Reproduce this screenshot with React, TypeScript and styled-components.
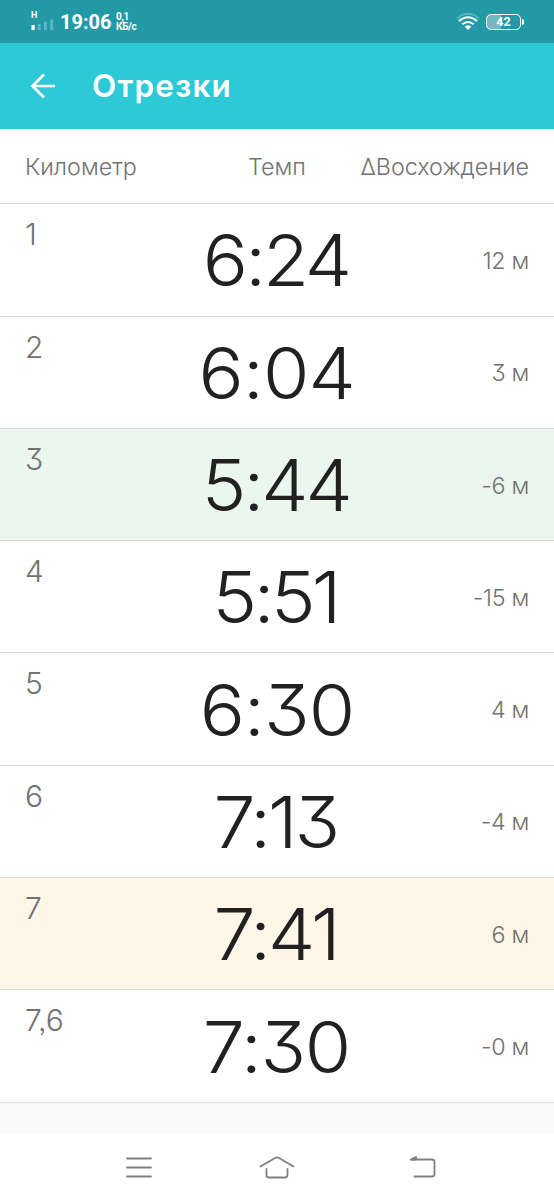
import React from "react";
import styled, { createGlobalStyle } from "styled-components";

const Global = createGlobalStyle`
  * { box-sizing: border-box; }
  body { margin: 0; background: #fff; }
`;

const Screen = styled.div`
  width: 554px;
  height: 1200px;
  display: flex;
  flex-direction: column;
  overflow: hidden;
  background: #fafafa;
  font-family: Inter, "Open Sans", sans-serif;
  font-feature-settings: "cv09" 1, "ss03" 1, "calt" 0;
  color: #727272;
`;

const StatusBar = styled.div`
  height: 43px;
  flex: none;
  display: flex;
  align-items: center;
  padding: 0 30px;
  background: #2499a6;
  color: #fff;
  font-family: Roboto, sans-serif;
`;

const Network = styled.div`
  display: flex;
  flex-direction: column;
  width: 30px;
  padding-left: 1px;
  margin-top: -2px;
  font-size: 9px;
  line-height: 8px;
  font-weight: 700;
`;

const Signal = styled.svg`
  width: 23px;
  height: 11px;
`;

const Clock = styled.div`
  width: 56px;
  font-size: 20px;
  font-weight: 700;
  line-height: 24px;
  padding-top: 1px;
  white-space: nowrap;
`;

const Speed = styled.div`
  flex: 1;
  font-size: 10px;
  font-weight: 700;
  line-height: 10px;
  letter-spacing: -0.3px;
  white-space: pre-line;
`;

const Wifi = styled.svg`
  width: 24px;
  height: 18px;
  margin-right: 6px;
`;

const Battery = styled.div`
  position: relative;
  width: 35px;
  height: 16px;
  border: 1.5px solid #fff;
  border-radius: 5px;
  background: linear-gradient(90deg, #71b9c1 42%, transparent 42%);
  font-size: 12.5px;
  font-weight: 700;
  line-height: 14px;
  text-align: center;
  margin-right: 3px;

  &::after {
    content: "";
    position: absolute;
    right: -4px;
    top: 4px;
    width: 2px;
    height: 6px;
    border-radius: 0 2px 2px 0;
    background: #fff;
  }
`;

const AppBar = styled.header`
  height: 86px;
  flex: none;
  display: flex;
  align-items: center;
  padding-left: 30px;
  background: #2ec9d7;
`;

const BackArrow = styled.svg`
  width: 26px;
  height: 26px;
  margin-right: 36px;
`;

const Title = styled.h1`
  margin: 0;
  font-size: 31.5px;
  font-weight: 570;
  line-height: 36px;
  letter-spacing: 1.2px;
  color: #fff;
`;

const Columns = styled.div`
  height: 75.3px;
  flex: none;
  display: grid;
  grid-template-columns: 1fr auto 1fr;
  align-items: center;
  padding: 1px 25px 0;
  border-bottom: 1px solid #dadada;
  background: #fff;
  font-size: 23.3px;
  font-weight: 300;
`;

const ColumnName = styled.span<{ $end?: boolean }>`
  justify-self: ${(p) => (p.$end ? "end" : "start")};
  white-space: nowrap;
`;

const Row = styled.div<{ $tone?: string }>`
  height: 112.3px;
  flex: none;
  display: grid;
  grid-template-columns: 1fr 160px 1fr;
  align-items: center;
  padding: 2px 25px 0;
  border-bottom: 1px solid #dadada;
  background: ${(p) => p.$tone ?? "#fff"};
`;

const Distance = styled.span`
  align-self: start;
  padding-top: 10px;
  font-size: 30px;
  font-weight: 300;
  line-height: 36px;
`;

const Pace = styled.span<{ $tracking: number }>`
  justify-self: center;
  font-size: 71px;
  font-weight: 350;
  line-height: 84px;
  letter-spacing: ${(p) => p.$tracking}px;
  margin-right: ${(p) => -p.$tracking}px;
  margin-top: -1px;
  transform: scaleX(1.06);
  white-space: nowrap;
  color: #212121;
`;

const Climb = styled.span`
  justify-self: end;
  font-size: 23.3px;
  font-weight: 300;
  line-height: 30px;
  letter-spacing: -0.3px;
`;

const NavBar = styled.nav`
  height: 66px;
  flex: none;
  display: flex;
  justify-content: center;
  align-items: center;
  gap: 106px;
  margin-top: auto;
  background: #fefefe;
`;

const NavIcon = styled.svg`
  width: 36px;
  height: 36px;
  fill: none;
  stroke: #808080;
  stroke-width: 1.8;
  stroke-linecap: round;
  stroke-linejoin: round;
`;

const splits = [
  { km: "1", pace: "6:24", climb: "12 м", tracking: -3 },
  { km: "2", pace: "6:04", climb: "3 м", tracking: -1 },
  { km: "3", pace: "5:44", climb: "-6 м", tone: "#eaf6ee", tracking: -3 },
  { km: "4", pace: "5:51", climb: "-15 м", tracking: -3.5 },
  { km: "5", pace: "6:30", climb: "4 м", tracking: -1 },
  { km: "6", pace: "7:13", climb: "-4 м", tracking: -3 },
  { km: "7", pace: "7:41", climb: "6 м", tone: "#fff6e8", tracking: -3 },
  { km: "7,6", pace: "7:30", climb: "-0 м", tracking: -1.5 },
];

export default function App() {
  return (
    <Screen>
      <Global />
      <StatusBar>
        <Network>
          <span>H</span>
          <Signal viewBox="0 0 23 11">
            <rect x="0.5" y="6" width="3.2" height="5" fill="#fff" />
            <rect x="6.7" y="5" width="3" height="6" fill="#5db4be" />
            <rect x="12.9" y="2.7" width="3" height="8.3" fill="#5db4be" />
            <rect x="19.2" y="0.5" width="3" height="10.5" fill="#5db4be" />
          </Signal>
        </Network>
        <Clock>19:06</Clock>
        <Speed>{"0,1\nКБ/с"}</Speed>
        <Wifi viewBox="0 0 24 18" fill="none" strokeWidth="2">
          <path d="M1 5.2Q12-3.6 23 5.2" stroke="#5db4be" />
          <path d="M3 8Q12 .6 21 8M6.3 11.3Q12 6.6 17.7 11.3" stroke="#fff" />
          <path d="M8.7 13.5Q12 10.8 15.3 13.5L12 17z" fill="#fff" />
        </Wifi>
        <Battery>42</Battery>
      </StatusBar>
      <AppBar>
        <BackArrow viewBox="0 0 26 26" fill="none" stroke="#fff" strokeWidth="2.7">
          <path d="M25 13H3M14 1.5L2.5 13L14 24.5" />
        </BackArrow>
        <Title>Отрезки</Title>
      </AppBar>
      <Columns>
        <ColumnName>Километр</ColumnName>
        <ColumnName>Темп</ColumnName>
        <ColumnName $end>ΔВосхождение</ColumnName>
      </Columns>
      {splits.map((s) => (
        <Row key={s.km} $tone={s.tone}>
          <Distance>{s.km}</Distance>
          <Pace $tracking={s.tracking}>{s.pace}</Pace>
          <Climb>{s.climb}</Climb>
        </Row>
      ))}
      <NavBar>
        <NavIcon viewBox="0 0 36 36">
          <path d="M10 9.5H34M10 18.5H34M10 27.5H34" />
        </NavIcon>
        <NavIcon viewBox="0 0 36 36">
          <path d="M1.5 17.5L16 9Q18 7.8 20 9L34.5 17.5M7.5 20V26Q7.5 28.5 10 28.5H26Q28.5 28.5 28.5 26V20" />
        </NavIcon>
        <NavIcon viewBox="0 0 36 36">
          <path d="M10 10.5H31Q33.500 10.5 33.500 13V25Q33.500 27.5 31 27.5H13.500" />
          <path d="M10 10.5L15 8V10.5z" fill="#808080" />
        </NavIcon>
      </NavBar>
    </Screen>
  );
}
